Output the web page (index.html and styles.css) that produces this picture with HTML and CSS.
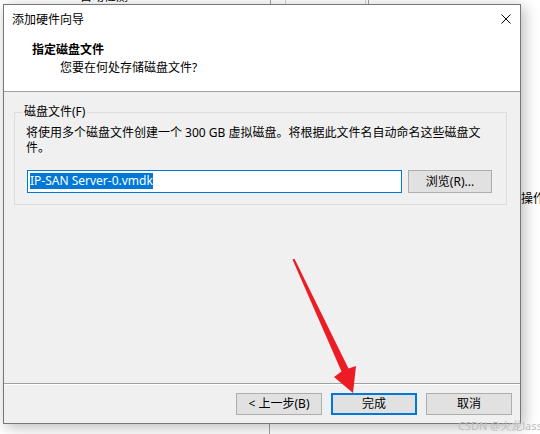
FILE: index.html
```html
<!DOCTYPE html>
<html>
  <head>
    <link rel="stylesheet" href="styles.css">
  </head>
  <body>
    <!-- window behind the wizard -->
    <div class="behind">
      <div class="behind-text detect">自动检测</div>
      <div class="behind-line line-a"></div>
      <div class="behind-line line-b"></div>
      <div class="behind-text size">300 GB</div>
      <div class="behind-line line-c"></div>
      <div class="behind-line line-d"></div>
      <div class="behind-text ops">操作</div>
      <div class="behind-line line-e"></div>
    </div>

    <div class="dialog">
      <div class="titlebar">
        <span class="title">添加硬件向导</span>
        <svg class="close" width="10" height="10" viewBox="0 0 10 10">
          <path d="M0.5 0.5 L9.5 9.5 M9.5 0.5 L0.5 9.5" stroke="#000" stroke-width="1" fill="none"/>
        </svg>
      </div>
      <div class="header">
        <div class="heading">指定磁盘文件</div>
        <div class="subheading">您要在何处存储磁盘文件?</div>
      </div>
      <div class="content">
        <fieldset class="group">
          <legend>磁盘文件(F)</legend>
          <p class="desc">将使用多个磁盘文件创建一个 300 GB 虚拟磁盘。将根据此文件名自动命名这些磁盘文<br>件。</p>
          <div class="file-row">
            <div class="file-input"><span class="selected">IP-SAN Server-0.vmdk</span></div>
            <button class="btn browse">浏览(R)...</button>
          </div>
        </fieldset>
      </div>
      <div class="footer">
        <button class="btn">&lt; 上一步(B)</button>
        <button class="btn default">完成</button>
        <button class="btn">取消</button>
      </div>
    </div>

    <!-- red annotation arrow pointing at the finish button -->
    <svg class="annotation" width="540" height="434" viewBox="0 0 540 434">
      <polygon points="292.5,259.5 294.5,258.7 348.5,368.5 356,366 353,393 334,377 341.5,371.5" fill="#ed1c24"/>
    </svg>

    <div class="watermark">CSDN @火龙lass</div>
  </body>
</html>
```

FILE: styles.css
```css
* {
  box-sizing: border-box;
  margin: 0;
  padding: 0;
}

body {
  width: 540px;
  height: 434px;
  position: relative;
  overflow: hidden;
  background: #ffffff;
  font-family: "Noto Sans", "Noto Sans CJK SC", sans-serif;
  font-size: 12px;
  line-height: 16px;
  color: #000;
}

/* background window bits */
.behind-text {
  position: absolute;
  white-space: nowrap;
}

.detect {
  left: 80px;
  top: -11px;
}

.size {
  left: 308px;
  top: -12px;
  font-weight: bold;
}

.ops {
  left: 521px;
  top: 191px;
}

.behind-line {
  position: absolute;
  width: 1px;
  background: #a0a0a0;
}

.line-a {
  left: 270px;
  top: 0;
  height: 4px;
}

.line-b {
  left: 285px;
  top: 0;
  height: 4px;
  background: #d4d4d4;
}

.line-c {
  left: 365px;
  top: 0;
  height: 4px;
  background: #d4d4d4;
}

.line-d {
  left: 368px;
  top: 0;
  height: 4px;
}

.line-e {
  left: 269px;
  top: 424px;
  height: 10px;
}

/* wizard window */
.dialog {
  position: absolute;
  left: 3px;
  top: 4px;
  width: 518px;
  height: 420px;
  border: 1px solid #777777;
  background: #f0f0f0;
  box-shadow: 3px 3px 14px rgba(0, 0, 0, 0.28);
  display: flex;
  flex-direction: column;
}

.titlebar {
  height: 30px;
  background: #fff;
  display: flex;
  align-items: center;
  justify-content: space-between;
  padding: 0 9px 0 8px;
}

.close {
  display: block;
  margin-top: -2px;
}

.header {
  height: 57px;
  background: #fff;
  border-bottom: 1px solid #a0a0a0;
  padding: 7px 0 0 28px;
}

.heading {
  font-weight: bold;
}

.subheading {
  margin-top: 2px;
  padding-left: 28px;
}

.content {
  flex: 1;
  padding: 12px 13px 0 10px;
}

.group {
  border: 1px solid #dcdcdc;
  padding: 0 14px 11px 11px;
}

.group legend {
  padding: 0 2px;
  margin-left: -4px;
  line-height: 16px;
}

.desc {
  margin-top: 5px;
  line-height: 15px;
}

.file-row {
  display: flex;
  justify-content: space-between;
  margin-top: 15px;
  padding-left: 1px;
}

.file-input {
  width: 375px;
  height: 23px;
  background: #fff;
  border: 1px solid #0078d7;
  padding: 2px 0 0 2px;
}

.selected {
  display: inline-block;
  background: #0078d7;
  color: #fff;
  line-height: 16px;
}

.btn {
  font-family: inherit;
  font-size: 12px;
  color: #000;
  background: #e1e1e1;
  border: 1px solid #adadad;
  width: 86px;
  height: 22px;
  line-height: 16px;
}

.browse {
  width: 84px;
  height: 23px;
}

.footer {
  height: 40px;
  border-top: 1px solid #a0a0a0;
  box-shadow: inset 0 1px 0 #fff;
  display: flex;
  justify-content: flex-end;
  gap: 9px;
  padding: 9px 8px 0 0;
}

.default {
  border: 2px solid #0078d7;
}

.annotation {
  position: absolute;
  left: 0;
  top: 0;
}

.watermark {
  position: absolute;
  left: 458px;
  top: 418px;
  font-size: 11px;
  color: #bdbdbd;
  white-space: nowrap;
}
```
